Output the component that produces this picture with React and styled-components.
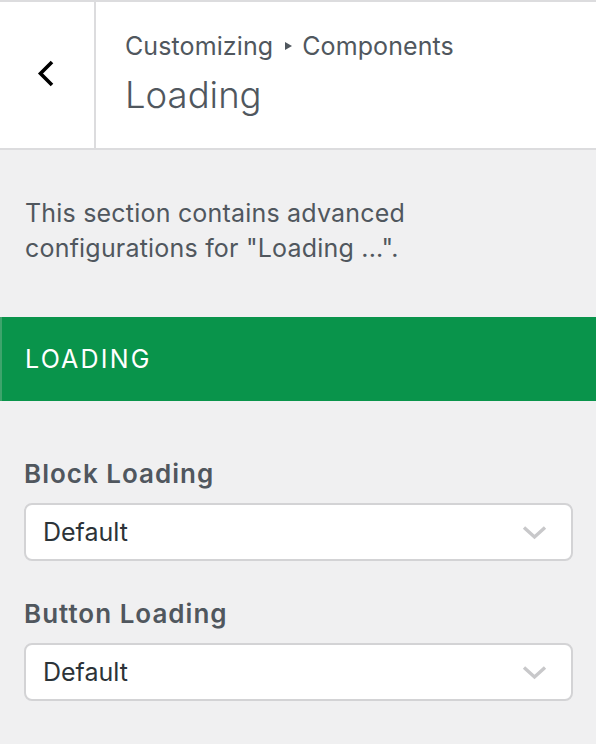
import React from 'react'
import styled, { createGlobalStyle } from 'styled-components'

const GlobalStyle = createGlobalStyle`
  html, body {
    margin: 0;
    padding: 0;
    background: #f0f0f1;
  }
  body {
    font-family: Inter, "Noto Sans", "Liberation Sans", sans-serif;
    color: #50575e;
  }
`

const Panel = styled.div`
  width: 596px;
  min-height: 744px;
  background: #f0f0f1;
  border-top: 2px solid #dcdcde;
`

const Header = styled.div`
  display: flex;
  height: 146px;
  background: #ffffff;
  border-bottom: 2px solid #dcdcde;
`

const BackButton = styled.button`
  width: 96px;
  flex: none;
  display: flex;
  align-items: center;
  justify-content: center;
  padding: 0 2px 2px 0;
  background: #ffffff;
  border: none;
  border-right: 2px solid #dcdcde;
  cursor: pointer;
`

const HeaderText = styled.div`
  display: flex;
  flex-direction: column;
  justify-content: center;
  gap: 11px;
  padding-left: 29px;
  padding-bottom: 2px;
`

const Crumbs = styled.div`
  display: flex;
  align-items: center;
  font-size: 25px;
  line-height: 30px;
  letter-spacing: 0.1px;
  color: #50575e;
`

const Arrow = styled.span`
  display: inline-block;
  width: 0;
  height: 0;
  margin: 0 10px 0 12px;
  border-top: 4px solid transparent;
  border-bottom: 4px solid transparent;
  border-left: 7px solid #50575e;
`

const Title = styled.div`
  font-size: 36.5px;
  line-height: 46px;
  font-weight: 300;
  color: #50575e;
`

const Description = styled.p`
  margin: 0;
  padding: 46px 25px 0;
  font-size: 25px;
  line-height: 35px;
  letter-spacing: 0.2px;
  color: #50575e;
`

const SectionBand = styled.div`
  display: flex;
  align-items: center;
  height: 84px;
  margin-top: 51px;
  padding-left: 23px;
  background: #09944b;
  border-left: 2px solid #3ea46c;
  color: #ffffff;
  font-size: 25px;
  letter-spacing: 2.2px;
  text-transform: uppercase;
`

const Controls = styled.div`
  display: flex;
  flex-direction: column;
  gap: 38px;
  padding: 58px 23px 0 24px;
`

const Field = styled.div`
  display: flex;
  flex-direction: column;
  gap: 14px;
`

const Label = styled.label`
  font-size: 26px;
  line-height: 30px;
  font-weight: 600;
  letter-spacing: 1px;
  color: #50575e;
`

const Select = styled.div`
  display: flex;
  align-items: center;
  justify-content: space-between;
  height: 54px;
  padding: 0 24px 0 17px;
  background: #ffffff;
  border: 2px solid #d3d3d5;
  border-radius: 8px;
  font-size: 25px;
  color: #2c3338;
`

const BackIcon = () => (
  <svg width="20" height="30" viewBox="0 0 20 30">
    <path d="M16 3 L4.5 14.5 L16 26" fill="none" stroke="#000" strokeWidth="3.6" />
  </svg>
)

const Chevron = () => (
  <svg width="25" height="15" viewBox="0 0 25 15">
    <path d="M2 2.5 L12.5 12 L23 2.5" fill="none" stroke="#c8c8ca" strokeWidth="3.4" />
  </svg>
)

const fields = ['Block Loading', 'Button Loading']

export default function App() {
  return (
    <Panel>
      <GlobalStyle />
      <Header>
        <BackButton>
          <BackIcon />
        </BackButton>
        <HeaderText>
          <Crumbs>
            Customizing<Arrow />Components
          </Crumbs>
          <Title>Loading</Title>
        </HeaderText>
      </Header>
      <Description>
        This section contains advanced configurations for "Loading ...".
      </Description>
      <SectionBand>Loading</SectionBand>
      <Controls>
        {fields.map(name => (
          <Field key={name}>
            <Label>{name}</Label>
            <Select>
              Default
              <Chevron />
            </Select>
          </Field>
        ))}
      </Controls>
    </Panel>
  )
}
